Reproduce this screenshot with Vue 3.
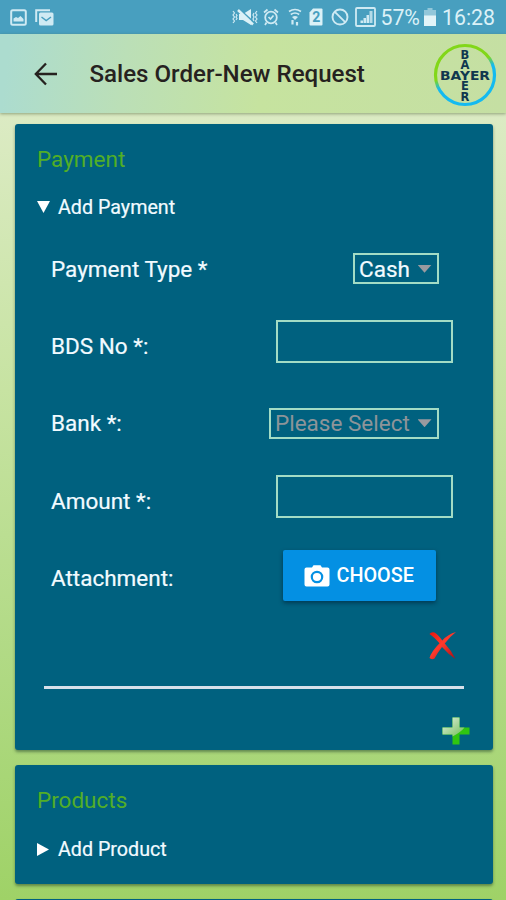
<script setup>
import { ref } from 'vue'

const paymentOpen = ref(true)
const productOpen = ref(false)

const form = ref({
  bdsNo: '',
  amount: '',
})
</script>

<template>
  <div class="screen">
    <!-- status bar -->
    <div class="status-bar">
      <div class="status-left">
        <svg width="17" height="17" viewBox="0 0 17 17">
          <rect x="1.2" y="1.2" width="14.6" height="14.6" rx="1.5" fill="none" stroke="#cfeaf3" stroke-width="2" />
          <path d="M3.5 12.5V9.5L6 8l2 1 2.5-2 3 3v2.5z" fill="#cfeaf3" />
        </svg>
        <svg width="19" height="17" viewBox="0 0 19 17">
          <path d="M1.2 13V1.2H15" fill="none" stroke="#cfeaf3" stroke-width="2" />
          <rect x="4" y="3.5" width="14.5" height="13" rx="1.5" fill="#cfeaf3" />
          <path d="M6.5 8l4.7 3.5L16 8" fill="none" stroke="#489fbf" stroke-width="1.5" />
        </svg>
      </div>
      <div class="status-right">
        <svg class="mute" width="26" height="18" viewBox="0 0 26 18">
          <path d="M7 6h4l8-5v16l-8-5H7z" fill="#dbf1f7" />
          <path d="M7 1l16 14.5" stroke="#489fbf" stroke-width="1.8" />
          <path d="M6 2l15 14.5" stroke="#dbf1f7" stroke-width="2.5" />
          <path d="M1 3l1.5 2L1 7l1.5 2L1 11l1.5 2L1 15M4 6l1 1.5L4 9l1 1.5L4 12M22 5l-1 2 1 2-1 2 1 2M25 3l-1.5 2L25 7l-1.5 2 1.5 2-1.5 2 1.5 2" fill="none" stroke="#cfeaf3" stroke-width="1.2" />
        </svg>
        <svg class="alarm" width="16" height="18" viewBox="0 0 16 18">
          <circle cx="8" cy="9.5" r="5.8" fill="none" stroke="#cfeaf3" stroke-width="1.8" />
          <path d="M1 4.5L4.5 1.5M15 4.5l-3.5-3M3.5 14.5L2 17M12.5 14.5L14 17M5.5 9l2 2 3-3.5" fill="none" stroke="#cfeaf3" stroke-width="1.7" />
        </svg>
        <svg class="wifi" width="14" height="18" viewBox="0 0 14 18">
          <path d="M1 3.5Q7-.5 13 3.5M2.8 6.5Q7 3.5 11.2 6.5" fill="none" stroke="#cfeaf3" stroke-width="1.7" />
          <path d="M4 9Q7 7 10 9L7 12z" fill="#cfeaf3" />
          <path d="M4.5 12v4.5M9 14v3.5" stroke="#cfeaf3" stroke-width="2.2" />
        </svg>
        <svg class="sim" width="14" height="18" viewBox="0 0 14 18">
          <path d="M4 .5h8.5q1 0 1 1v15q0 1-1 1h-11q-1 0-1-1V4.5z" fill="#dbf1f7" />
          <text x="7.2" y="14.3" text-anchor="middle" class="sim-text">2</text>
        </svg>
        <svg class="blocked" width="18" height="18" viewBox="0 0 18 18">
          <circle cx="9" cy="9" r="7.5" fill="none" stroke="#cfeaf3" stroke-width="1.9" />
          <path d="M3.8 3.8l10.4 10.4" stroke="#cfeaf3" stroke-width="1.9" />
        </svg>
        <svg class="signal" width="21" height="20" viewBox="0 0 21 20">
          <rect x="1" y="1" width="19" height="18" rx="1" fill="none" stroke="#cfeaf3" stroke-width="1.8" />
          <path d="M5.5 16v-2.5h2.5V16zM8.5 16v-5h2.5v5zM11.5 16V8H14v8z" fill="#cfeaf3" />
          <path d="M14.5 16V4h3v12z" fill="#b4dbe8" />
        </svg>
        <span class="percent">57%</span>
        <svg class="battery" width="12" height="18" viewBox="0 0 12 18">
          <path d="M3.5 0h5v2H12v6H0V2h3.5z" fill="#91c7da" />
          <path d="M0 7.5h12V18H0z" fill="#e2f4f8" />
        </svg>
        <span class="clock">16:28</span>
      </div>
    </div>

    <!-- app header -->
    <header class="header">
      <svg class="back" width="24" height="24" viewBox="0 0 24 24">
        <path d="M12 1.5L1.8 12 12 22.5M2 12h21" fill="none" stroke="#26221f" stroke-width="2.3" />
      </svg>
      <h1>Sales Order-New Request</h1>
      <svg class="logo" width="64" height="64" viewBox="0 0 64 64">
        <defs>
          <linearGradient id="ring" x1="0.3" y1="0.05" x2="0.7" y2="0.95">
            <stop offset="0.38" stop-color="#82d719" />
            <stop offset="0.54" stop-color="#14baf0" />
          </linearGradient>
        </defs>
        <circle cx="32" cy="32" r="29.5" fill="none" stroke="url(#ring)" stroke-width="3.2" />
        <g class="logo-text" text-anchor="middle">
          <text x="32" y="36.5" class="across" textLength="50" lengthAdjust="spacingAndGlyphs">BAYER</text>
          <text x="32" y="15.5">B</text>
          <text x="32" y="25.7">A</text>
          <text x="32" y="47">E</text>
          <text x="32" y="57.8">R</text>
        </g>
      </svg>
    </header>

    <main class="content">
      <section class="card payment">
        <h2>Payment</h2>
        <div class="summary" @click="paymentOpen = !paymentOpen">
          <span class="marker" :class="{ open: paymentOpen }"></span>
          Add Payment
        </div>

        <div v-if="paymentOpen" class="entry">
          <div class="row">
            <label>Payment Type *</label>
            <button class="select cash">Cash<i class="caret"></i></button>
          </div>
          <div class="row">
            <label>BDS No *:</label>
            <input v-model="form.bdsNo" type="text" />
          </div>
          <div class="row">
            <label>Bank *:</label>
            <button class="select bank">Please Select<i class="caret"></i></button>
          </div>
          <div class="row">
            <label>Amount *:</label>
            <input v-model="form.amount" type="text" />
          </div>
          <div class="row">
            <label>Attachment:</label>
            <button class="choose">
              <svg width="26" height="22" viewBox="0 0 26 22">
                <path d="M2.5 2.5H8L9.5.3h7L18 2.5h5.5q2 0 2 2V19.5q0 2-2 2h-21q-2 0-2-2V4.5q0-2 2-2z" fill="#fff" />
                <circle cx="13" cy="12" r="5.2" fill="none" stroke="#0490e3" stroke-width="2.2" />
              </svg>
              CHOOSE
            </button>
          </div>
          <svg class="remove" width="29" height="29" viewBox="0 0 29 29">
            <defs>
              <linearGradient id="red" x1="0" y1="0" x2="1" y2="1">
                <stop offset="0" stop-color="#e8150c" />
                <stop offset="0.45" stop-color="#ff3a2c" />
                <stop offset="1" stop-color="#a80d14" />
              </linearGradient>
            </defs>
            <path d="M1.5 3Q3 .8 6.5 1.5Q10 3.5 14.3 9.5Q20 3 28 1Q21.5 6 16.8 12.5Q23 19 27.5 28Q20 23 14 16Q9 22.5 6.5 27.5Q3.5 29 1.5 27Q3 21 11.5 12.3Q6 6 1.5 3z" fill="url(#red)" />
          </svg>
        </div>

        <hr />

        <svg class="add" width="28" height="28" viewBox="0 0 28 28">
          <defs>
            <linearGradient id="shine" x1="0" y1="0" x2="1" y2="1">
              <stop offset="0" stop-color="#e6f1e4" />
              <stop offset="1" stop-color="#6dbd55" />
            </linearGradient>
          </defs>
          <path d="M10.5.5h7v10h10v7h-10v10h-7v-10h-10v-7h10z" fill="#30c510" />
          <path d="M10.5.5h7v10h5q-4 5-12 9v-2h-10v-7h10z" fill="url(#shine)" />
        </svg>
      </section>

      <section class="card products">
        <h2>Products</h2>
        <div class="summary" @click="productOpen = !productOpen">
          <span class="marker" :class="{ open: productOpen }"></span>
          Add Product
        </div>
      </section>

      <section class="card next"></section>
    </main>
  </div>
</template>

<style>
body {
  margin: 0;
  overflow: hidden;
}
</style>

<style scoped>
.screen {
  display: flex;
  flex-direction: column;
  width: 506px;
  height: 900px;
  overflow: hidden;
  font-family: Roboto, "Liberation Sans", sans-serif;
  background: linear-gradient(180deg, #dcebc4 110px, #c7e3a2 390px, #afd982 680px, #9fd267 900px);
}
svg {
  display: block;
  flex: none;
}

.status-bar {
  display: flex;
  justify-content: space-between;
  align-items: center;
  flex: none;
  height: 34px;
  padding: 0 11px 0 10px;
  box-sizing: border-box;
  background: #489fbf;
  color: #dbf1f7;
  font-size: 21.3px;
}
.status-left,
.status-right {
  display: flex;
  align-items: center;
}
.status-left {
  gap: 8px;
}
.alarm {
  margin-left: 5px;
}
.wifi {
  margin-left: 9px;
}
.sim {
  margin-left: 7px;
}
.sim-text {
  font-size: 14px;
  font-weight: 700;
  fill: #489fbf;
}
.blocked {
  margin-left: 8px;
}
.signal {
  margin-left: 6px;
}
.percent {
  margin-left: 4px;
}
.battery {
  margin: 0 6px 0 4px;
}

.header {
  display: flex;
  align-items: center;
  flex: none;
  height: 79px;
  padding: 0 9px 0 34px;
  box-sizing: border-box;
  background: linear-gradient(97deg, #acdccf 2%, #bbdfb7 25%, #c6e39f 52%, #c5dfa3 100%);
  box-shadow: 0 1px 3px rgba(70, 90, 50, 0.5);
}
h1 {
  flex: 1;
  margin: 0 0 0 31.5px;
  font-size: 24.1px;
  font-weight: 500;
  line-height: 30px;
  white-space: nowrap;
  color: #26221f;
}
.logo {
  margin-top: 2px;
}
.logo-text {
  font-family: "DejaVu Sans", sans-serif;
  font-size: 11.5px;
  font-weight: 700;
  fill: #10384f;
}
.across {
  font-size: 12.5px;
}

.content {
  display: flex;
  flex-direction: column;
  gap: 15px;
  padding: 10.5px 13.5px 0 14.5px;
}
.card {
  flex: none;
  box-sizing: border-box;
  padding: 21.5px 29px 0 22.5px;
  border-radius: 3px;
  background: #00617f;
  box-shadow: 0 2px 3px rgba(30, 60, 40, 0.5);
}
.payment {
  height: 626.5px;
}
.products {
  height: 119px;
  padding-top: 21px;
}
.next {
  height: 60px;
}
h2 {
  margin: 0;
  font-size: 22.5px;
  font-weight: 400;
  line-height: 28px;
  color: #52ae27;
}
.summary {
  display: flex;
  align-items: center;
  height: 24px;
  margin-top: 22px;
  font-size: 19.7px;
  color: #f2fbff;
  -webkit-text-stroke: 0.2px #f2fbff;
  cursor: pointer;
}
.products .summary {
  margin-top: 23.5px;
}
.marker {
  width: 12px;
  height: 13px;
  margin-right: 9px;
  background: #fff;
  clip-path: polygon(0 0, 100% 50%, 0 100%);
}
.marker.open {
  width: 13px;
  height: 12px;
  margin-right: 8px;
  clip-path: polygon(0 0, 100% 0, 50% 100%);
}

.entry {
  padding: 11px 11px 0 14px;
}
.row {
  display: flex;
  justify-content: space-between;
  align-items: center;
  height: 77.3px;
}
label {
  font-size: 22.5px;
  color: #f2fbff;
  -webkit-text-stroke: 0.2px #f2fbff;
}
input {
  width: 177px;
  height: 43px;
  box-sizing: border-box;
  margin: 0 0 9px;
  padding: 0 8px;
  border: 2px solid #a3dcc5;
  background: transparent;
  color: #fff;
  font: inherit;
}
.select {
  display: flex;
  justify-content: space-between;
  align-items: center;
  height: 31px;
  margin-right: 14px;
  padding: 0 5px 0 4.5px;
  box-sizing: border-box;
  border: 2px solid #a3dcc5;
  background: transparent;
  font-family: inherit;
  font-size: 22.5px;
  color: #f2fbff;
}
.cash {
  width: 86px;
  -webkit-text-stroke: 0.2px #f2fbff;
}
.bank {
  width: 170px;
  color: #8d9499;
}
.caret {
  width: 14px;
  height: 8px;
  background: #9a9a9f;
  clip-path: polygon(0 0, 100% 0, 50% 100%);
}
.choose {
  display: flex;
  align-items: center;
  gap: 7px;
  width: 153px;
  height: 51px;
  margin: -4px 17px 0 0;
  padding: 0 0 0 21px;
  border: none;
  border-radius: 2px;
  background: #0490e3;
  box-shadow: 0 2px 4px rgba(0, 20, 40, 0.5);
  color: #fff;
  font-family: inherit;
  font-size: 19.8px;
  font-weight: 500;
}
.remove {
  margin: 15px -4px 0 auto;
}
hr {
  height: 3px;
  margin: 26px 0 0 6.5px;
  border: none;
  background: #d6e0ea;
}
.add {
  margin: 28px -6.5px 0 auto;
}
</style>
